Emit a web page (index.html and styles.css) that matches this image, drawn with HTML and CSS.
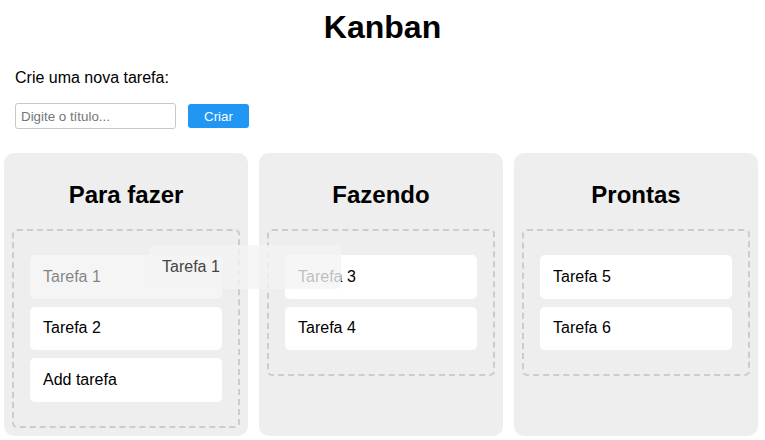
FILE: index.html
```html
<!DOCTYPE html>
<html lang="pt-BR">
<head>
<meta charset="utf-8">
<title>Kanban</title>
<link rel="stylesheet" href="styles.css">
</head>
<body>
<h1 class="title">Kanban</h1>
<section class="creator">
  <p class="creator-label">Crie uma nova tarefa:</p>
  <div class="creator-row">
    <input class="creator-input" type="text" placeholder="Digite o título...">
    <button class="creator-button" type="button">Criar</button>
  </div>
</section>
<main class="board">
  <section class="column">
    <h2 class="column-title">Para fazer</h2>
    <div class="dropzone">
      <div class="card card-dragging">Tarefa 1</div>
      <div class="card">Tarefa 2</div>
      <div class="card">Add tarefa</div>
    </div>
  </section>
  <section class="column">
    <h2 class="column-title">Fazendo</h2>
    <div class="dropzone">
      <div class="card">Tarefa 3</div>
      <div class="card">Tarefa 4</div>
    </div>
  </section>
  <section class="column">
    <h2 class="column-title">Prontas</h2>
    <div class="dropzone">
      <div class="card">Tarefa 5</div>
      <div class="card">Tarefa 6</div>
    </div>
  </section>
</main>
<div class="drag-ghost">Tarefa 1</div>
</body>
</html>
```
FILE: styles.css
```css
* { box-sizing: border-box; }
html, body { margin: 0; padding: 0; background: #fff; }
body {
  font-family: "Liberation Sans", Arial, sans-serif;
  color: #000;
  position: relative;
}
.title {
  margin: 9px 0 0;
  font-size: 32px;
  line-height: 37px;
  font-weight: bold;
  text-align: center;
}
.creator {
  padding: 0 15px;
}
.creator-label {
  margin: 23px 0 0;
  font-size: 16px;
  line-height: 18px;
}
.creator-row {
  display: flex;
  align-items: center;
  gap: 12px;
  margin-top: 16px;
}
.creator-input {
  width: 161px;
  height: 26px;
  border: 1px solid #c8c8c8;
  border-radius: 3px;
  padding: 2px 5px;
  font-family: "Liberation Sans", Arial, sans-serif;
  font-size: 13.33px;
  color: #000;
  background: #fff;
}
.creator-input::placeholder { color: #757575; }
.creator-button {
  width: 61px;
  height: 24px;
  border: none;
  border-radius: 3px;
  background: #2196f3;
  color: #fff;
  font-family: "Liberation Sans", Arial, sans-serif;
  font-size: 13.33px;
  padding: 0;
}
.board {
  display: flex;
  align-items: stretch;
  gap: 11px;
  padding: 0 0 0 4px;
  margin-top: 24px;
}
.column {
  width: 244px;
  flex: 0 0 244px;
  background: #eee;
  border-radius: 10px;
  padding: 8px;
}
.column-title {
  margin: 20px 0;
  font-size: 24px;
  line-height: 28px;
  font-weight: bold;
  text-align: center;
}
.dropzone {
  border: 2px dashed #ccc;
  border-radius: 5px;
  padding: 24px 16px;
  display: flex;
  flex-direction: column;
  gap: 8px;
}
.card {
  background: #fff;
  border-radius: 5px;
  height: 43.5px;
  padding: 0 13px;
  display: flex;
  align-items: center;
  font-size: 16px;
}
.card-dragging {
  opacity: 0.45;
}
.drag-ghost {
  position: absolute;
  left: 149px;
  top: 245px;
  width: 192px;
  height: 43.5px;
  padding: 0 13px;
  display: flex;
  align-items: center;
  border-radius: 5px;
  background: rgba(243, 243, 243, 0.78);
  color: #444;
  font-size: 16px;
}
```
